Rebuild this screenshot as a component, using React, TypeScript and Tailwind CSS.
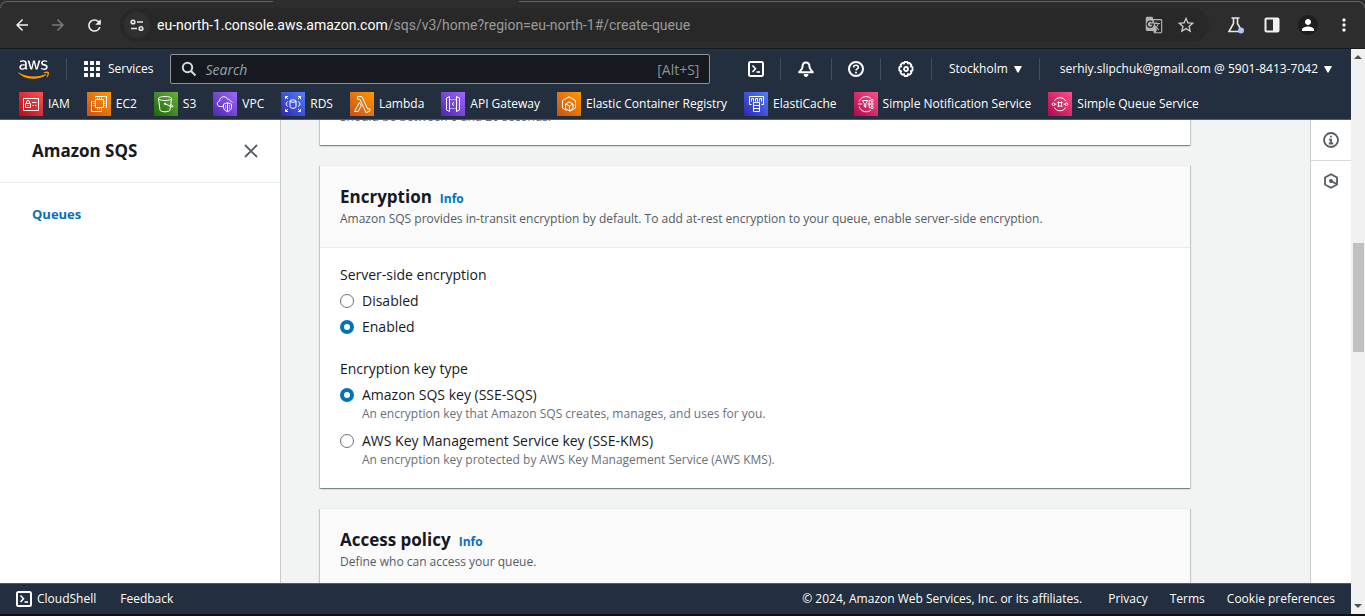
import React, { useState } from "react";
import type { ReactNode } from "react";
import { FaAws } from "react-icons/fa";
import {
  MdArrowBack,
  MdArrowForward,
  MdGTranslate,
  MdMoreVert,
  MdPerson,
  MdRefresh,
  MdStarBorder,
} from "react-icons/md";

/* ---------- Browser toolbar ---------- */

function TuneIcon() {
  return (
    <svg viewBox="0 0 14 14" className="size-[14px]" fill="none" stroke="#e8e8e8" strokeWidth="1.6">
      <circle cx="3" cy="4" r="1.8" />
      <path d="M7 4h6M1 10.5h6" />
      <circle cx="11" cy="10.5" r="1.8" />
    </svg>
  );
}

function FlaskIcon() {
  return (
    <svg viewBox="0 0 18 18" className="size-[18px]" fill="none">
      <path d="M4.5 2h8M6.5 2v5.5L2 15.5h13L10.5 7.5V2" stroke="#e8e8e8" strokeWidth="1.6" />
      <circle cx="14" cy="14.5" r="3" fill="#a8c7fa" />
    </svg>
  );
}

function SidePanelIcon() {
  return (
    <svg viewBox="0 0 16 16" className="size-4" fill="none">
      <rect x="1.5" y="1.5" width="13" height="13" rx="1" stroke="#f1f1f1" strokeWidth="2" />
      <path d="M9 1h5.5v14H9z" fill="#f1f1f1" />
    </svg>
  );
}

function BrowserBar() {
  return (
    <div className="shrink-0 border-b border-[#161a1c] bg-[#2d2d2d] font-['Roboto',sans-serif]">
      <div className="flex h-2 justify-between pt-px">
        <div className="w-1/5 rounded-tl-lg border-t border-l border-[#656565]" />
        <div className="w-[62%] rounded-tr-lg border-t border-r border-[#656565]" />
      </div>
      <div className="flex items-center pb-[6px] pl-3 text-[#f1f1f1]">
        <div className="flex items-center gap-4">
          <button aria-label="Back" className="flex size-5 items-center justify-center">
            <MdArrowBack size={18} />
          </button>
          <button aria-label="Forward" className="flex size-5 items-center justify-center text-[#7b7b7b]">
            <MdArrowForward size={18} />
          </button>
          <button aria-label="Reload" className="flex size-5 items-center justify-center">
            <MdRefresh size={19} />
          </button>
        </div>
        <div className="ml-4 flex h-[34px] flex-1 items-center rounded-full bg-[#282828] pr-[13px] pl-1">
          <button aria-label="View site information" className="flex size-[26px] items-center justify-center rounded-full bg-[#303030]">
            <TuneIcon />
          </button>
          <p className="ml-[7px] flex-1 text-sm whitespace-nowrap text-[#9a9a9a]">
            <span className="text-white">eu-north-1.console.aws.amazon.com</span>
            /sqs/v3/home?region=eu-north-1#/create-queue
          </p>
          <button aria-label="Translate this page" className="text-[#b4b4b4]">
            <MdGTranslate size={18} />
          </button>
          <button aria-label="Bookmark this page" className="ml-[13px] text-[#c9c9c9]">
            <MdStarBorder size={20} />
          </button>
        </div>
        <div className="flex items-center gap-4 pr-[11px] pl-[17px]">
          <button aria-label="Labs" className="flex size-5 items-center justify-center">
            <FlaskIcon />
          </button>
          <button aria-label="Side panel" className="flex size-5 items-center justify-center">
            <SidePanelIcon />
          </button>
          <button aria-label="Profile" className="flex size-5 items-center justify-center rounded-full bg-[#1e1e1e] text-white">
            <MdPerson size={18} />
          </button>
          <button aria-label="Menu" className="flex size-5 items-center justify-center">
            <MdMoreVert size={20} />
          </button>
        </div>
      </div>
    </div>
  );
}

/* ---------- Console header ---------- */

function AwsLogo() {
  return (
    <a href="#home" aria-label="AWS home" className="flex items-center">
      <svg width="0" height="0" aria-hidden="true">
        <defs>
          <linearGradient id="aws-fill" x1="0" y1="0" x2="0" y2="1">
            <stop offset="0.62" stopColor="#ffffff" />
            <stop offset="0.62" stopColor="#ff9900" />
          </linearGradient>
        </defs>
      </svg>
      <FaAws className="h-[25px] w-[31px]" fill="url(#aws-fill)" />
    </a>
  );
}

function Separator() {
  return <span className="h-[22px] w-px shrink-0 bg-[#414d5c]" />;
}

function ShellIcon() {
  return (
    <svg viewBox="0 0 16 16" className="size-4" fill="none" stroke="currentColor" strokeWidth="2">
      <rect x="1" y="1" width="14" height="14" rx="1.5" />
      <path d="M4.5 4.5 7.5 7.8 4.5 11" strokeWidth="1.6" />
      <path d="M8.5 11h3.5" strokeWidth="1.6" />
    </svg>
  );
}

function BellIcon() {
  return (
    <svg viewBox="0 0 16 16" className="size-4" fill="none" stroke="currentColor" strokeWidth="2" strokeLinejoin="round">
      <path d="M8 1.5C5.6 1.5 4.6 3.2 4.6 5.2 4.6 8 3 9 1.2 11.2h13.6C13 9 11.4 8 11.4 5.2c0-2-1-3.7-3.4-3.7z" />
      <path d="M6 13.5a2 2 0 0 0 4 0z" fill="currentColor" strokeWidth="1" />
    </svg>
  );
}

function HelpIcon() {
  return (
    <svg viewBox="0 0 16 16" className="size-4" fill="none" stroke="currentColor" strokeWidth="2">
      <circle cx="8" cy="8" r="7" />
      <path d="M5.6 6.4C5.6 4.9 6.7 4.2 8 4.2s2.4.8 2.4 2.1c0 1.5-2.4 1.6-2.4 3.2" strokeWidth="1.6" />
      <path d="M8 10.7v1.7" strokeWidth="1.8" />
    </svg>
  );
}

function GearIcon() {
  return (
    <svg viewBox="0 0 16 16" className="size-4" fill="none" stroke="currentColor">
      <path
        d="M6.6 1h2.8l.5 1.6 1.5-.7 2 2-.7 1.5 1.8.6v3.6l-1.8.6.7 1.6-2 2-1.5-.8L9.4 15H6.6l-.6-2-1.5.8-2-2 .8-1.6L1.3 9.6V6l2-.6-.8-1.5 2-2 1.5.7z"
        strokeWidth="1.8"
        strokeLinejoin="round"
      />
      <circle cx="8" cy="8" r="2" strokeWidth="1.8" />
    </svg>
  );
}

function Caret() {
  return (
    <svg viewBox="0 0 8 7" className="h-[7px] w-2" fill="currentColor">
      <path d="M0 0h8L4.6 6.5H3.4z" />
    </svg>
  );
}

function GridIcon() {
  return (
    <svg viewBox="0 0 16 16" className="size-4" fill="currentColor">
      {[0, 6, 12].map((y) => [0, 6, 12].map((x) => <rect key={`${x}-${y}`} x={x} y={y} width="4" height="4" rx="0.5" />))}
    </svg>
  );
}

type Palette = "red" | "orange" | "green" | "purple" | "blue" | "pink";

const gradients: Record<Palette, [string, string]> = {
  red: ["#bd0816", "#ff5252"],
  orange: ["#c8511b", "#ff9900"],
  green: ["#1b660f", "#6cae3e"],
  purple: ["#4d27aa", "#a166ff"],
  blue: ["#2e27ad", "#527fff"],
  pink: ["#b0084d", "#ff4f8b"],
};

function Tile({ palette, children }: { palette: Palette; children: ReactNode }) {
  return (
    <svg viewBox="0 0 24 24" className="size-6 shrink-0" aria-hidden="true">
      <defs>
        <linearGradient id={`tile-${palette}`} x1="0" y1="1" x2="1" y2="0">
          <stop offset="0" stopColor={gradients[palette][0]} />
          <stop offset="1" stopColor={gradients[palette][1]} />
        </linearGradient>
      </defs>
      <rect width="24" height="24" fill={`url(#tile-${palette})`} />
      <g fill="none" stroke="#fff" strokeWidth="1">
        {children}
      </g>
    </svg>
  );
}

const favorites: { name: string; palette: Palette; art: ReactNode }[] = [
  {
    name: "IAM",
    palette: "red",
    art: (
      <>
        <path d="M4.5 6.5h15v12h-15z" />
        <path d="M6.5 11.5h5v4h-5zM7.5 11.5V10a1.5 1.5 0 0 1 3 0v1.5M9 13v1" />
        <path d="M13 10.5h4.5M13.5 13.5h1.5M16 13.5h1.5" />
      </>
    ),
  },
  {
    name: "EC2",
    palette: "orange",
    art: (
      <>
        <path d="M8.5 5.5v-1h11v11h-1M5.500 9.500h-1v10h10v-1" />
        <path d="M8.5 7.5h8v8h-8z" />
        <path
          d="M10.5 7V5.500M12.500 7V5.500M14.500 7V5.500M10.500 17.500V16M12.500 17.500V16M14.500 17.500V16M8 9.500H6.500M8 11.500H6.500M8 13.500H6.500M18.500 9.500H17M18.500 11.500H17M18.500 13.500H17"
          strokeWidth="0.8"
        />
      </>
    ),
  },
  {
    name: "S3",
    palette: "green",
    art: (
      <>
        <ellipse cx="11" cy="6.5" rx="6.5" ry="2" />
        <path d="M4.5 6.5 6 18c.3 1.1 2.4 1.8 5 1.8s4.7-.7 5-1.8l1.5-11.5" />
        <path d="m11 11.8 6 2.7c1.8.7 2.8.2 1.8-.7l-1.8-1.3" />
        <circle cx="11" cy="11.8" r="0.7" fill="#fff" />
      </>
    ),
  },
  {
    name: "VPC",
    palette: "purple",
    art: (
      <>
        <path d="M9.8 14.5H7.3C5.5 14.5 4.3 13.4 4.3 11.8c0-1.5 1-2.5 2.3-2.7 0-2.5 1.8-4.4 4.2-4.4 1.9 0 3.2 1 3.9 2.7 1.3-.5 2.4.3 2.6 1.5 1 .2 1.8.7 2.2 1.6" />
        <path d="m14.5 10.7 4 1.4v3.2c0 2.2-1.7 3.4-4 4.4-2.3-1-4-2.2-4-4.4v-3.2z" />
        <path d="M14.5 11v8.5" />
        <path d="M12.5 13v4M16.5 13v4" strokeWidth="0.5" />
      </>
    ),
  },
  {
    name: "RDS",
    palette: "blue",
    art: (
      <>
        <ellipse cx="12" cy="9" rx="3" ry="1.2" />
        <path d="M9 9v6c0 .7 1.3 1.2 3 1.2s3-.5 3-1.2V9" />
        <path d="M4.500 7V4.500H7M4.500 4.500l2.500 2.500M17 4.500h2.500V7M19.500 4.500 17 7M4.500 17v2.500H7M4.500 19.500 7 17M17 19.500h2.500V17M19.500 19.500 17 17" />
        <path d="M6.500 9.500 4.800 12l1.700 2.500M17.500 9.500l1.700 2.500-1.700 2.500" />
      </>
    ),
  },
  {
    name: "Lambda",
    palette: "orange",
    art: (
      <>
        <path d="M7.5 4.5h4.3l6 12.7 2-.6v2.7l-3.8 1.2L9.8 7.2H7.5z" strokeLinejoin="round" />
        <path d="M9.4 10.5 4.5 19.5h3.7l3-5.8z" strokeLinejoin="round" />
      </>
    ),
  },
  {
    name: "API Gateway",
    palette: "purple",
    art: (
      <>
        <path d="M8.5 4.5 5.5 6v12l3 1.5zM15.5 4.5l3 1.5v12l-3 1.5z" />
        <path d="M9.5 7.5h5M9.5 16.5h5" strokeDasharray="1 1" />
        <path d="m13 10.2-2 1.8 2 1.8" />
      </>
    ),
  },
  {
    name: "Elastic Container Registry",
    palette: "orange",
    art: (
      <>
        <path d="M9.5 18.5 5.5 16V8.5L12 4.8l6.500 3.700V16l-5 3" />
        <path d="m8.500 12 3.500-2 4 2v4.500L12.500 19 8.500 16.500zM8.500 12l4 2 3.500-2M12.500 14v5" />
      </>
    ),
  },
  {
    name: "ElastiCache",
    palette: "blue",
    art: (
      <>
        <path d="M7.5 12.5h-2v-8h14v8h-2" />
        <path d="M7.5 9.5v-3h2v3M11.5 9.5v-3h2v3M15.5 9.5v-3h2v3" />
        <path d="M9.5 10.5h6v9h-6zM9.5 13.5h6M9.5 16.5h6" />
      </>
    ),
  },
  {
    name: "Simple Notification Service",
    palette: "pink",
    art: (
      <>
        <path d="M17 6.5A7.3 7.3 0 0 0 5.2 9.5M17 18a7.3 7.3 0 0 1-11.8-3.5M4 12h4" />
        <path d="M8.3 8.5h5.5l-2 3.200v3.600l-1.500-.7v-2.900z" />
        <path d="M13.500 12h3M15.200 8.500v7M15.200 8.500h1.300M15.200 15.500h1.300" />
        <circle cx="18" cy="8.5" r="1.2" />
        <circle cx="18" cy="12" r="1.2" />
        <circle cx="18" cy="15.5" r="1.2" />
      </>
    ),
  },
  {
    name: "Simple Queue Service",
    palette: "pink",
    art: (
      <>
        <path d="M6.3 9a6.5 6.5 0 0 1 11.4 0M6.3 15.5a6.5 6.5 0 0 0 11.4 0" />
        <circle cx="5.5" cy="12.2" r="1.3" />
        <circle cx="18.5" cy="12.2" r="1.3" />
        <path d="M7 12.200h1.500M15.500 12.200H17M10.500 9.500v5.500M13.500 9.500v5.500M9.500 10.500h5M9.500 14h5" />
      </>
    ),
  },
];

function ConsoleHeader() {
  return (
    <header className="shrink-0 border-b border-[#545b64] bg-[#232f3e] text-white">
      <div className="flex h-10 items-center pr-[19px] pl-[18px]">
        <AwsLogo />
        <span className="ml-[17px] flex">
          <Separator />
        </span>
        <button className="ml-[17px] flex items-center gap-2 text-xs">
          <GridIcon />
          Services
        </button>
        <label className="ml-[17px] flex h-[30px] max-w-[540px] flex-1 items-center rounded-xs border border-[#879596] bg-[#16191f] px-[10px] text-[#879596]">
          <svg viewBox="0 0 16 16" className="size-4 shrink-0" fill="none" stroke="#d5dbdb" strokeWidth="2">
            <circle cx="6.5" cy="6.5" r="4.7" />
            <path d="m10 10 4.5 4.5" />
          </svg>
          <input
            type="search"
            aria-label="Search"
            placeholder="Search"
            className="ml-2 min-w-0 flex-1 bg-transparent text-[14px] italic outline-none placeholder:text-[#95a5a6]"
          />
          <span className="text-[14px]">[Alt+S]</span>
        </label>
        <div className="ml-auto flex items-center">
          <button aria-label="CloudShell" className="px-4">
            <ShellIcon />
          </button>
          <Separator />
          <button aria-label="Notifications" className="px-[17px]">
            <BellIcon />
          </button>
          <Separator />
          <button aria-label="Support" className="px-4">
            <HelpIcon />
          </button>
          <Separator />
          <button aria-label="Settings" className="px-[17px]">
            <GearIcon />
          </button>
          <Separator />
          <button className="flex items-center gap-[6px] px-[17px] text-xs">
            Stockholm
            <Caret />
          </button>
          <Separator />
          <button className="flex items-center gap-[6px] pl-5 text-xs">
            serhiy.slipchuk@gmail.com @ 5901-8413-7042
            <Caret />
          </button>
        </div>
      </div>
      <nav aria-label="Favorites" className="flex h-[30px] items-center gap-[17px] pl-[19px] text-xs">
        {favorites.map((f) => (
          <a key={f.name} href="#favorites" className="flex items-center gap-[5px] whitespace-nowrap">
            <Tile palette={f.palette}>{f.art}</Tile>
            {f.name}
          </a>
        ))}
      </nav>
    </header>
  );
}

/* ---------- Page content ---------- */

const cardClass =
  "border-t border-[#eaeded] bg-white shadow-[0_1px_1px_0_rgba(0,28,36,0.3),1px_1px_1px_0_rgba(0,28,36,0.15),-1px_1px_1px_0_rgba(0,28,36,0.15)]";

function Card({ title, description, children }: { title: string; description: string; children?: ReactNode }) {
  return (
    <section className={cardClass}>
      <div className="border-b border-[#eaeded] bg-[#fafafa] px-5 pt-5 pb-[17px]">
        <div className="flex h-[22px] items-baseline gap-2">
          <h2 className="text-[17px] leading-[22px] font-bold text-[#16191f]">{title}</h2>
          <a href="#info" className="text-xs font-bold text-[#0073bb]">
            Info
          </a>
        </div>
        <p className="text-xs leading-[22px] text-[#545b64]">{description}</p>
      </div>
      {children}
    </section>
  );
}

interface Option {
  value: string;
  label: string;
  hint?: string;
}

function RadioGroup({ name, legend, options, initial }: { name: string; legend: string; options: Option[]; initial: string }) {
  const [value, setValue] = useState(initial);
  return (
    <fieldset>
      <legend className="text-[14px] leading-[22px]">{legend}</legend>
      {options.map((o, i) => (
        <div key={o.value} className={`flex gap-2 ${i > 0 && o.hint ? "mt-2" : "mt-1"}`}>
          <input
            type="radio"
            id={`${name}-${o.value}`}
            name={name}
            checked={value === o.value}
            onChange={() => setValue(o.value)}
            className="mt-1 size-[14px] shrink-0 appearance-none rounded-full border border-[#687078] bg-white checked:border-4 checked:border-[#0073bb]"
          />
          <label htmlFor={`${name}-${o.value}`} className="text-[14px] leading-[22px]">
            {o.label}
            {o.hint && <span className="block text-xs leading-4 text-[#687078]">{o.hint}</span>}
          </label>
        </div>
      ))}
    </fieldset>
  );
}

function SideNav() {
  return (
    <aside className="w-[281px] shrink-0 border-r border-[#c8cccc] bg-white">
      <div className="flex h-[63px] items-center justify-between border-b border-[#eaeded] pr-[22px] pl-8">
        <h1 className="text-[17px] leading-[22px] font-bold">Amazon SQS</h1>
        <button aria-label="Close navigation" className="text-[#545b64]">
          <svg viewBox="0 0 14 14" className="size-[14px]" fill="none" stroke="currentColor" strokeWidth="1.8">
            <path d="m1 1 12 12M13 1 1 13" />
          </svg>
        </button>
      </div>
      <nav className="px-8 pt-5">
        <a href="#queues" className="block text-[13px] leading-[22px] font-bold text-[#0073bb]">
          Queues
        </a>
      </nav>
    </aside>
  );
}

function ToolsRail() {
  return (
    <aside className="w-[41px] shrink-0 border-l border-[#c8cccc] bg-white text-[#545b64]">
      <button aria-label="Open info panel" className="flex h-[41px] w-full items-center justify-center border-b border-[#d5dbdb]">
        <svg viewBox="0 0 16 16" className="size-4" fill="none" stroke="currentColor" strokeWidth="1.8">
          <circle cx="8" cy="8" r="7" />
          <path d="M8 3.7v1.9M6 7.7h2v3.5M5.8 11.5h4.4" />
        </svg>
      </button>
      <button aria-label="Open diagnostics" className="flex h-10 w-full items-center justify-center">
        <svg viewBox="0 0 16 16" className="size-4" fill="none" stroke="currentColor" strokeWidth="1.8">
          <path d="m8 1.2 6 3.3v7L8 14.8l-6-3.3v-7z" strokeLinejoin="round" />
          <circle cx="8" cy="8" r="2" fill="currentColor" stroke="none" />
          <path d="m8 8 5.5 3" />
        </svg>
      </button>
    </aside>
  );
}

function ConsoleFooter() {
  return (
    <footer className="flex h-[31px] shrink-0 items-center justify-between border-t border-[#545b64] bg-[#232f3e] px-4 text-xs text-white">
      <div className="flex items-center gap-6">
        <button className="flex items-center gap-[5px]">
          <ShellIcon />
          CloudShell
        </button>
        <button>Feedback</button>
      </div>
      <div className="flex items-center gap-[22px]">
        <span className="mr-1">© 2024, Amazon Web Services, Inc. or its affiliates.</span>
        <a href="#privacy">Privacy</a>
        <a href="#terms">Terms</a>
        <button>Cookie preferences</button>
      </div>
    </footer>
  );
}

function PageScrollbar() {
  return (
    <div aria-hidden="true" className="flex w-[14px] shrink-0 flex-col items-center bg-[#f1f1f1] py-[6px] text-[#505050]">
      <svg viewBox="0 0 8 4" className="h-1 w-2" fill="currentColor">
        <path d="M4 0l4 4H0z" />
      </svg>
      <div className="grow-[184]" />
      <div className="w-[11px] grow-[109] bg-[#c1c1c1]" />
      <div className="grow-[252]" />
      <svg viewBox="0 0 8 4" className="h-1 w-2" fill="currentColor">
        <path d="M0 0h8L4 4z" />
      </svg>
    </div>
  );
}

export default function App() {
  return (
    <div className="flex h-screen flex-col bg-[#111] font-['Open_Sans','Noto_Sans',sans-serif] text-[#16191f]">
      <BrowserBar />
      <div className="flex min-h-0 flex-1 pb-[2px]">
        <div className="flex min-w-0 flex-1 flex-col">
          <ConsoleHeader />
          <div className="flex min-h-0 flex-1 overflow-hidden">
            <SideNav />
            <main className="min-w-0 flex-1 overflow-hidden bg-[#f2f3f3] pr-[120px] pl-[39px]">
              <div className="-mt-[13px] flex flex-col gap-5">
                <section className={cardClass}>
                  <p className="px-5 pb-5 text-xs leading-[17px] text-[#687078]">Should be between 0 and 20 seconds.</p>
                </section>
                <Card
                  title="Encryption"
                  description="Amazon SQS provides in-transit encryption by default. To add at-rest encryption to your queue, enable server-side encryption."
                >
                  <div className="flex flex-col gap-5 px-5 pt-4 pb-5">
                    <RadioGroup
                      name="sse"
                      legend="Server-side encryption"
                      initial="enabled"
                      options={[
                        { value: "disabled", label: "Disabled" },
                        { value: "enabled", label: "Enabled" },
                      ]}
                    />
                    <RadioGroup
                      name="key-type"
                      legend="Encryption key type"
                      initial="sqs"
                      options={[
                        {
                          value: "sqs",
                          label: "Amazon SQS key (SSE-SQS)",
                          hint: "An encryption key that Amazon SQS creates, manages, and uses for you.",
                        },
                        {
                          value: "kms",
                          label: "AWS Key Management Service key (SSE-KMS)",
                          hint: "An encryption key protected by AWS Key Management Service (AWS KMS).",
                        },
                      ]}
                    />
                  </div>
                </Card>
                <Card title="Access policy" description="Define who can access your queue.">
                  <div className="h-40" />
                </Card>
              </div>
            </main>
            <ToolsRail />
          </div>
          <ConsoleFooter />
        </div>
        <PageScrollbar />
      </div>
    </div>
  );
}
